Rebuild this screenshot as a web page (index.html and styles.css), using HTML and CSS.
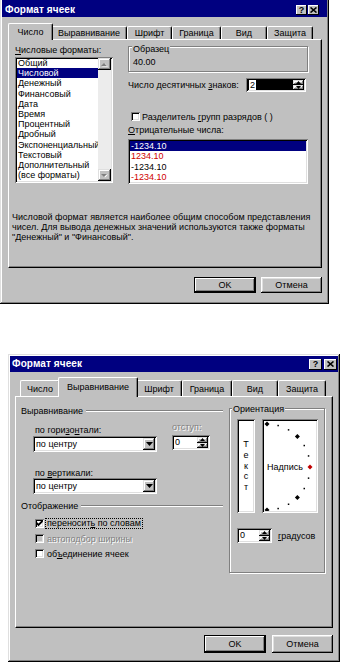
FILE: index.html
```html
<!DOCTYPE html>
<html lang="ru">
<head>
<meta charset="utf-8">
<title>Формат ячеек</title>
<link rel="stylesheet" href="styles.css">
</head>
<body>
<div class="page">

  <!-- ===== Dialog 1: Число ===== -->
  <div class="dlg dlg-a">
    <div class="title title-a">
      <span class="title-text">Формат ячеек</span>
      <div class="tbtns">
        <span class="tbtn">?</span>
        <span class="tbtn"><svg width="7" height="6" viewBox="0 0 7 6"><path d="M0.5 0.5 L6.5 5.5 M6.5 0.5 L0.5 5.5" stroke="#000" stroke-width="1.6"/></svg></span>
      </div>
    </div>
    <div class="tabs tabs-a">
      <div class="tab sel">Число</div>
      <div class="tab">Выравнивание</div>
      <div class="tab">Шрифт</div>
      <div class="tab">Граница</div>
      <div class="tab">Вид</div>
      <div class="tab">Защита</div>
    </div>
    <div class="panel panel-a">
      <div class="num-cols">
        <div class="fmt-col">
          <div class="lbl"><u>Ч</u>исловые форматы:</div>
          <div class="listbox fmt-list">
            <div class="items">
              <div class="item">Общий</div>
              <div class="item hl">Числовой</div>
              <div class="item">Денежный</div>
              <div class="item">Финансовый</div>
              <div class="item">Дата</div>
              <div class="item">Время</div>
              <div class="item">Процентный</div>
              <div class="item">Дробный</div>
              <div class="item">Экспоненциальный</div>
              <div class="item">Текстовый</div>
              <div class="item">Дополнительный</div>
              <div class="item">(все форматы)</div>
            </div>
            <div class="vscroll">
              <div class="sbtn"><svg width="7" height="5" viewBox="0 0 7 5"><path d="M1 4.5 L4 1.5 L7 4.5Z" fill="#fff"/><path d="M0 4 L3 1 L6 4Z" fill="#808080"/></svg></div>
              <div class="strack"></div>
              <div class="sbtn"><svg width="7" height="5" viewBox="0 0 7 5"><path d="M1 1.5 L7 1.5 L4 4.5Z" fill="#fff"/><path d="M0 1 L6 1 L3 4Z" fill="#808080"/></svg></div>
            </div>
          </div>
        </div>
        <div class="opt-col">
          <div class="sample">
            <div class="sample-lbl">Образец</div>
            <div class="sample-val">40.00</div>
          </div>
          <div class="dec-row">
            <span>Число десятичных <u>з</u>наков:</span>
            <div class="spin spin-dec">
              <div class="spin-field dark"><span class="seltxt">2</span></div>
              <div class="spin-btns">
                <div class="sb"><svg width="5" height="3" viewBox="0 0 5 3"><path d="M0 3 L2.5 0 L5 3Z" fill="#000"/></svg></div>
                <div class="sb"><svg width="5" height="3" viewBox="0 0 5 3"><path d="M0 0 L5 0 L2.5 3Z" fill="#000"/></svg></div>
              </div>
            </div>
          </div>
          <div class="sep-row">
            <span class="chk"></span>
            <span>Разделитель <u>г</u>рупп разрядов ( )</span>
          </div>
          <div class="lbl neg-lbl"><u>О</u>трицательные числа:</div>
          <div class="listbox neg-list">
            <div class="item hl">-1234.10</div>
            <div class="item red">1234.10</div>
            <div class="item">-1234.10</div>
            <div class="item red">-1234.10</div>
          </div>
        </div>
      </div>
      <p class="desc">Числовой формат является наиболее общим способом представления<br>чисел. Для вывода денежных значений используются также форматы<br>"Денежный" и "Финансовый".</p>
    </div>
    <div class="btn-row btn-row-a">
      <div class="btn def btn-ok">OK</div>
      <div class="btn btn-cancel">Отмена</div>
    </div>
  </div>

  <!-- ===== Dialog 2: Выравнивание ===== -->
  <div class="dlg dlg-b">
    <div class="title title-b">
      <span class="title-text">Формат ячеек</span>
      <div class="tbtns">
        <span class="tbtn">?</span>
        <span class="tbtn"><svg width="7" height="6" viewBox="0 0 7 6"><path d="M0.5 0.5 L6.5 5.5 M6.5 0.5 L0.5 5.5" stroke="#000" stroke-width="1.6"/></svg></span>
      </div>
    </div>
    <div class="tabs tabs-b">
      <div class="tab">Число</div>
      <div class="tab sel">Выравнивание</div>
      <div class="tab">Шрифт</div>
      <div class="tab">Граница</div>
      <div class="tab">Вид</div>
      <div class="tab">Защита</div>
    </div>
    <div class="panel panel-b">
      <div class="align-col">
        <div class="grp-head head1"><span>Выравнивание</span><span class="line"></span></div>
        <div class="align-body">
          <div class="ab-left">
            <div class="lbl l-h">по гори<u>з</u>о<u>н</u>тали:</div>
            <div class="combo combo1">
              <span class="combo-txt">по центру</span>
              <span class="dd"><svg width="7" height="4" viewBox="0 0 7 4"><path d="M0 0 L7 0 L3.5 4Z" fill="#000"/></svg></span>
            </div>
            <div class="lbl l-v">по <u>в</u>ертикали:</div>
            <div class="combo">
              <span class="combo-txt">по центру</span>
              <span class="dd"><svg width="7" height="4" viewBox="0 0 7 4"><path d="M0 0 L7 0 L3.5 4Z" fill="#000"/></svg></span>
            </div>
          </div>
          <div class="ab-right">
            <div class="lbl l-ind disabled">отступ:</div>
            <div class="spin spin-ind">
              <div class="spin-field">0</div>
              <div class="spin-btns">
                <div class="sb"><svg width="5" height="3" viewBox="0 0 5 3"><path d="M0 3 L2.5 0 L5 3Z" fill="#000"/></svg></div>
                <div class="sb"><svg width="5" height="3" viewBox="0 0 5 3"><path d="M0 0 L5 0 L2.5 3Z" fill="#000"/></svg></div>
              </div>
            </div>
          </div>
        </div>
        <div class="grp-head head2"><span>Отображение</span><span class="line"></span></div>
        <div class="chk-list">
          <div class="chk-row">
            <span class="chk"><svg width="7" height="7" viewBox="0 0 7 7"><path d="M0.5 3 L2.5 5 L6.5 1" fill="none" stroke="#000" stroke-width="1.8"/></svg></span>
            <span class="focus">переносит<u>ь</u> по словам</span>
          </div>
          <div class="chk-row disabled">
            <span class="chk chk-dis"></span>
            <span>автоподбор ширины</span>
          </div>
          <div class="chk-row">
            <span class="chk"></span>
            <span>об<u>ъ</u>единение ячеек</span>
          </div>
        </div>
      </div>
      <div class="orient">
        <div class="orient-lbl">Ориентация</div>
        <div class="orient-boxes">
          <div class="vtext"><span>Т</span><span>е</span><span>к</span><span>с</span><span>т</span></div>
          <div class="dial">
            <svg class="dial-svg" width="52" height="90" viewBox="2 2 52 90">
              <g fill="#000">
                <path d="M5 2.5 L7.5 5 L5 7.5 L2.5 5Z"/>
                <path d="M35.4 15.1 L37.9 17.6 L35.4 20.1 L32.9 17.6Z"/>
                <path d="M35.4 75.9 L37.9 78.4 L35.4 80.9 L32.9 78.4Z"/>
                <path d="M5 88.5 L7.5 91 L5 93.5 L2.5 91Z"/>
                <rect x="15.4" y="5.8" width="1.5" height="1.5"/>
                <rect x="25.8" y="10.1" width="1.5" height="1.5"/>
                <rect x="41.5" y="25.8" width="1.5" height="1.5"/>
                <rect x="45.8" y="36.2" width="1.5" height="1.5"/>
                <rect x="45.8" y="58.4" width="1.5" height="1.5"/>
                <rect x="41.5" y="68.8" width="1.5" height="1.5"/>
                <rect x="25.8" y="84.5" width="1.5" height="1.5"/>
                <rect x="15.4" y="88.8" width="1.5" height="1.5"/>
              </g>
              <path d="M48 45.5 L50.5 48 L48 50.5 L45.5 48Z" fill="#c00000"/>
            </svg>
            <span class="dial-txt">Надпись</span>
          </div>
        </div>
        <div class="deg-row">
          <div class="spin spin-deg">
            <div class="spin-field">0</div>
            <div class="spin-btns">
              <div class="sb"><svg width="5" height="3" viewBox="0 0 5 3"><path d="M0 3 L2.5 0 L5 3Z" fill="#000"/></svg></div>
              <div class="sb"><svg width="5" height="3" viewBox="0 0 5 3"><path d="M0 0 L5 0 L2.5 3Z" fill="#000"/></svg></div>
            </div>
          </div>
          <span class="deg-lbl"><u>г</u>радусов</span>
        </div>
      </div>
    </div>
    <div class="btn-row btn-row-b">
      <div class="btn def btn-ok">OK</div>
      <div class="btn btn-cancel">Отмена</div>
    </div>
  </div>

</div>
</body>
</html>
```

FILE: styles.css
```css
* { box-sizing: border-box; }
html, body { margin: 0; padding: 0; background: #fff; }
body {
  font-family: "Liberation Sans", Arial, sans-serif;
  font-size: 9px;
  line-height: 10px;
  color: #000;
  width: 342px;
  height: 664px;
  overflow: hidden;
}
u { text-decoration: underline; text-underline-offset: 1px; }

.page { display: flex; flex-direction: column; }

/* ---------- window frame ---------- */
.dlg { background: #c0c0c0; display: flex; flex-direction: column; }
.dlg-a {
  width: 329px; height: 304px;
  padding: 0 2px 2px 2px;
  box-shadow: inset -1px -1px #000, inset 1px 0 #dfdfdf, inset -2px -2px #808080, inset 2px 0 #fff;
}
.dlg-b {
  width: 332px; height: 308px;
  margin: 50px 0 0 8px;
  padding: 2px;
  box-shadow: inset -1px -1px #000, inset 1px 1px #dfdfdf, inset -2px -2px #808080, inset 2px 2px #fff;
}

/* ---------- title bar ---------- */
.title {
  background: #000080; color: #fff;
  display: flex; align-items: center; justify-content: space-between;
  flex: none;
}
.title-a { height: 17px; padding: 3px 8px 0 3px; }
.title-b { height: 16px; padding: 0 1px 0 2px; }
.title-text { font-weight: bold; font-size: 10px; letter-spacing: 0.1px; }
.tbtns { display: flex; gap: 1px; }
.title-b .tbtns { gap: 2px; }
.tbtn {
  width: 11px; height: 10px;
  background: #c0c0c0; color: #000;
  box-shadow: inset -1px -1px #000, inset 1px 1px #fff;
  display: flex; align-items: center; justify-content: center;
  font-weight: bold; font-size: 9px; line-height: 9px;
}
.title-b .tbtn { width: 13px; height: 11px; }

/* ---------- tabs ---------- */
.tabs { display: grid; align-items: end; flex: none; }
.tabs-a { grid-template-columns: 41px 76px 45px 49px 46px 46px; height: 16px; margin-top: 6px; padding-left: 8px; }
.tabs-b { grid-template-columns: 40px 76px 46px 50px 46px 48px; height: 19px; margin-top: 5px; padding-left: 10px; }
.tab {
  height: 13px;
  background: #c0c0c0;
  border-left: 1px solid #fff;
  border-top: 1px solid #fff;
  border-right: 1px solid #000;
  box-shadow: inset -1px 0 #808080;
  border-radius: 2px 2px 0 0;
  display: flex; align-items: center; justify-content: center;
  white-space: nowrap;
}
.tabs-b .tab { height: 16px; }
.tab.sel { height: 17px; margin: 0 -2px -1px; position: relative; z-index: 1; padding-bottom: 1px; }
.tabs-b .tab.sel { height: 20px; padding-bottom: 2px; }

/* ---------- panel ---------- */
.panel {
  background: #c0c0c0;
  border-left: 1px solid #fff; border-top: 1px solid #fff;
  border-right: 1px solid #000; border-bottom: 1px solid #000;
  box-shadow: inset -1px -1px #808080;
  flex: none;
}
.panel-a { margin-left: 6px; width: 314px; height: 229px; }
.panel-b { margin-left: 5px; width: 318px; height: 232px; display: flex; }

/* ---------- common controls ---------- */
.lbl { height: 10px; white-space: nowrap; }
.disabled { color: #808080; text-shadow: 1px 1px 0 #fff; }
.listbox, .spin, .combo, .chk, .vtext, .dial {
  box-shadow: inset 1px 1px #808080, inset -1px -1px #fff, inset 2px 2px #000, inset -2px -2px #dfdfdf;
}
.listbox { background: #fff; overflow: hidden; }
.item { line-height: 10.2px; height: 10.2px; padding-left: 1px; white-space: nowrap; }
.item.hl { background: #000080; color: #fff; }
.item.red { color: #d00000; }

.sbtn, .sb, .dd {
  background: #c0c0c0;
  box-shadow: inset -1px -1px #000, inset 1px 1px #dfdfdf, inset -2px -2px #808080, inset 2px 2px #fff;
}

.chk {
  width: 9px; height: 9px; flex: none;
  background: #fff;
  display: flex; align-items: center; justify-content: center;
}
.chk-dis { background: #c0c0c0; }

.spin { display: flex; background: #fff; padding: 2px; }
.spin-field { flex: 1; line-height: 11px; padding-left: 1px; }
.spin-field.dark { background: #000; }
.seltxt { background: #fff; color: #000; padding: 0 1px; }
.spin-btns { width: 11px; display: flex; flex-direction: column; }
.sb { flex: 1; display: flex; align-items: center; justify-content: center; }

.combo { display: flex; background: #fff; padding: 2px; height: 16px; }
.combo-txt { flex: 1; line-height: 12px; padding-left: 1px; }
.dd { width: 12px; display: flex; align-items: center; justify-content: center; }

/* ---------- buttons ---------- */
.btn-row { display: flex; justify-content: flex-end; flex: none; }
.btn-row-a { margin-top: 9px; gap: 5px; padding-right: 5px; }
.btn-row-b { margin-top: 7px; gap: 6px; padding-right: 5px; }
.btn {
  height: 16px;
  display: flex; align-items: center; justify-content: center;
  background: #c0c0c0;
  box-shadow: inset -1px -1px #000, inset 1px 1px #fff, inset -2px -2px #808080, inset 2px 2px #dfdfdf;
}
.btn-row-b .btn { height: 18px; }
.btn.def { border: 1px solid #000; box-shadow: inset -1px -1px #000, inset 1px 1px #fff, inset -2px -2px #808080; }
.btn-ok { width: 62px; }
.btn-cancel { width: 61px; }

/* ---------- dialog 1 content ---------- */
.num-cols { display: flex; margin-top: 5px; padding-left: 6px; }
.fmt-col { width: 98px; display: flex; flex-direction: column; }
.fmt-list { margin-top: 2px; height: 126px; display: flex; padding: 1px 2px 2px 2px; }
.items { flex: 1; overflow: hidden; }
.vscroll { width: 13px; display: flex; flex-direction: column; }
.sbtn { height: 12px; display: flex; align-items: center; justify-content: center; flex: none; }
.strack { flex: 1; background: #ececec; }

.opt-col { margin-left: 15px; width: 180px; display: flex; flex-direction: column; }
.sample {
  margin-top: 1px; height: 26px;
  border: 1px solid #808080;
  box-shadow: 1px 1px 0 #fff, inset 1px 1px 0 #fff;
  padding-left: 3px;
  display: flex; flex-direction: column; align-items: flex-start;
}
.sample-lbl { margin-top: -3px; height: 10px; background: #c0c0c0; padding: 0 1px; }
.sample-val { margin-top: 3px; padding-left: 1px; }
.dec-row { margin-top: 6px; height: 14px; display: flex; align-items: center; justify-content: space-between; padding-right: 2px; }
.spin-dec { width: 60px; height: 14px; }
.sep-row { margin-top: 19px; height: 11px; padding-left: 3px; display: flex; align-items: center; gap: 2px; }
.neg-lbl { margin-top: 3px; }
.neg-list { margin-top: 4px; height: 45px; padding: 2px; }
.neg-list .item { line-height: 10.3px; height: 10.3px; padding-left: 1px; }
.desc { margin: 28px 0 0 3px; line-height: 10px; white-space: nowrap; }

/* ---------- dialog 2 content ---------- */
.align-col { margin-left: 5px; width: 202px; display: flex; flex-direction: column; }
.grp-head { display: flex; align-items: center; height: 10px; }
.grp-head .line { flex: 1; height: 2px; border-top: 1px solid #808080; border-bottom: 1px solid #fff; margin-left: 3px; }
.head1 { margin-top: 9px; }
.head2 { margin-top: 7px; }
.align-body { display: flex; padding-left: 12px; }
.ab-left { width: 124px; display: flex; flex-direction: column; }
.ab-left .lbl { padding-left: 2px; }
.l-h { margin-top: 9px; }
.combo1 { margin-top: 1px; }
.l-v { margin-top: 16px; }
.ab-right { margin-left: 15px; width: 38px; display: flex; flex-direction: column; }
.l-ind { margin-top: 6px; }
.spin-ind { margin-top: 3px; height: 15px; }

.chk-list { margin-top: 5px; padding-left: 14px; display: flex; flex-direction: column; }
.chk-row { height: 15px; display: flex; align-items: center; gap: 3px; white-space: nowrap; }
.focus { border: 1px dotted #000; padding: 0 1px; margin-left: -2px; line-height: 9px; }

.orient {
  margin: 11px 0 0 6px;
  width: 96px; height: 165px;
  border: 1px solid #808080;
  box-shadow: 1px 1px 0 #fff, inset 1px 1px 0 #fff;
  display: flex; flex-direction: column; align-items: flex-start;
}
.orient-lbl { margin: -5px 0 0 2px; height: 10px; background: #c0c0c0; padding: 0 1px; }
.orient-boxes { display: flex; margin-top: 5px; padding-left: 7px; gap: 7px; }
.vtext {
  width: 18px; height: 94px; background: #fff;
  display: flex; flex-direction: column; align-items: center; justify-content: center;
  line-height: 10.7px;
}
.dial { width: 56px; height: 94px; background: #fff; position: relative; }
.dial-svg { position: absolute; left: 2px; top: 2px; }
.dial-txt { position: absolute; left: 5px; top: 43px; line-height: 10px; }
.deg-row { display: flex; align-items: center; margin-top: 15px; padding-left: 7px; }
.spin-deg { width: 35px; height: 15px; }
.deg-lbl { margin-left: 6px; }
```
